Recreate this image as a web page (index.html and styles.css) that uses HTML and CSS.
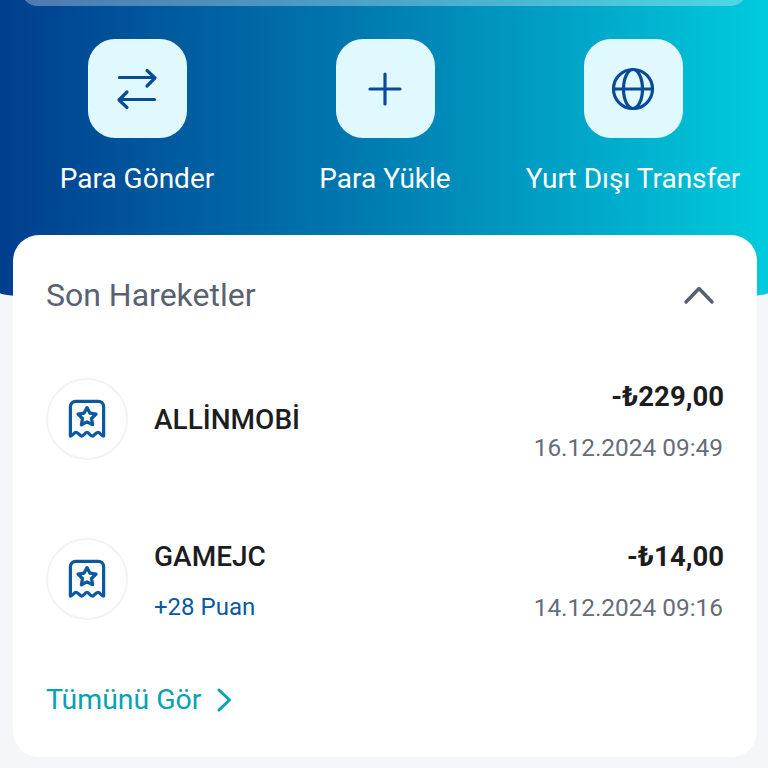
FILE: index.html
```html
<!DOCTYPE html>
<html lang="tr">
<head>
  <meta charset="UTF-8">
  <meta name="viewport" content="width=device-width, initial-scale=1.0">
  <title>Son Hareketler</title>
  <link rel="stylesheet" href="styles.css">
</head>
<body>
  <div class="hero">
    <div class="balance-edge"></div>
    <div class="actions">
      <div class="action">
        <div class="action-icon">
          <svg width="44" height="44" viewBox="0 0 44 44">
            <path d="M4.500 10.500H40M32 3.500L40 11L32 19M39.500 32.500H4M12 25L4 33L12 40.500"/>
          </svg>
        </div>
        <div class="action-label">Para Gönder</div>
      </div>
      <div class="action">
        <div class="action-icon">
          <svg width="44" height="44" viewBox="0 0 44 44">
            <path d="M7 22H37M22 7V37"/>
          </svg>
        </div>
        <div class="action-label">Para Yükle</div>
      </div>
      <div class="action">
        <div class="action-icon">
          <svg width="44" height="44" viewBox="0 0 44 44">
            <circle cx="22" cy="22" r="19.500"/>
            <ellipse cx="22" cy="22" rx="9.500" ry="19.500"/>
            <path d="M2.500 22H41.500"/>
          </svg>
        </div>
        <div class="action-label">Yurt Dışı Transfer</div>
      </div>
    </div>
  </div>

  <div class="card">
    <div class="card-header">
      <h2>Son Hareketler</h2>
      <svg class="chevron-up" width="32" height="20" viewBox="0 0 32 20">
        <path d="M3 17L16 3.500L29 17"/>
      </svg>
    </div>

    <div class="tx-row">
      <div class="tx-icon">
        <svg width="38" height="40" viewBox="0 0 40 42">
          <path d="M2.500 39V8A5.500 5.500 0 0 1 8 2.500H32A5.500 5.500 0 0 1 37.500 8V39C35 39 34 35 31.500 35S27.500 39 25.500 39S22 35 20 35S16.500 39 14.500 39S11 35 8.500 35S5 39 2.500 39Z"/>
          <path d="M20 9L23 14.800L29.500 15.900L24.800 20.500L25.900 27L20 24L14.100 27L15.200 20.500L10.500 15.900L17 14.800Z"/>
        </svg>
      </div>
      <div class="tx-info">
        <div class="tx-name">ALLİNMOBİ</div>
      </div>
      <div class="tx-right">
        <div class="tx-amount">-₺229,00</div>
        <div class="tx-date">16.12.2024 09:49</div>
      </div>
    </div>

    <div class="tx-row">
      <div class="tx-icon">
        <svg width="38" height="40" viewBox="0 0 40 42">
          <path d="M2.500 39V8A5.500 5.500 0 0 1 8 2.500H32A5.500 5.500 0 0 1 37.500 8V39C35 39 34 35 31.500 35S27.500 39 25.500 39S22 35 20 35S16.500 39 14.500 39S11 35 8.500 35S5 39 2.500 39Z"/>
          <path d="M20 9L23 14.800L29.500 15.900L24.800 20.500L25.900 27L20 24L14.100 27L15.200 20.500L10.500 15.900L17 14.800Z"/>
        </svg>
      </div>
      <div class="tx-info tx-info-double">
        <div class="tx-name">GAMEJC</div>
        <div class="tx-points">+28 Puan</div>
      </div>
      <div class="tx-right">
        <div class="tx-amount">-₺14,00</div>
        <div class="tx-date">14.12.2024 09:16</div>
      </div>
    </div>

    <div class="see-all">
      <span>Tümünü Gör</span>
      <svg width="16" height="24" viewBox="0 0 16 24">
        <path d="M3 2L13.500 12L3 22"/>
      </svg>
    </div>
  </div>
</body>
</html>
```

FILE: styles.css
```css
* {
  margin: 0;
  padding: 0;
  box-sizing: border-box;
}

body {
  height: 768px;
  overflow: hidden;
  font-family: Roboto, 'Noto Sans', sans-serif;
  background: #f4f6fa;
  color: #1c1d21;
}

.hero {
  height: 303px;
  overflow: hidden;
  background: linear-gradient(90deg, #003e8e 0%, #0077ae 45%, #00cbdd 100%);
  border-radius: 0 0 50% 50% / 0 0 10px 10px;
}

.balance-edge {
  height: 26px;
  margin: -20px 20px 0;
  background: rgba(255, 255, 255, 0.3);
  border-radius: 0 0 18px 18px;
}

.actions {
  display: grid;
  grid-template-columns: repeat(3, 248px);
  margin: 33px 0 0 13px;
}

.action {
  display: flex;
  flex-direction: column;
  align-items: center;
}

.action-icon {
  width: 99px;
  height: 99px;
  background: #e0f9ff;
  border-radius: 27px;
  display: flex;
  align-items: center;
  justify-content: center;
}

.action-icon svg {
  fill: none;
  stroke: #0a4b98;
  stroke-width: 3.200;
  stroke-linecap: round;
  stroke-linejoin: round;
}

.action-label {
  margin-top: 23px;
  font-size: 28px;
  line-height: 36px;
  color: #fff;
  white-space: nowrap;
}

.card {
  position: relative;
  height: 522px;
  margin: -68px 11px 0 13px;
  padding: 0 33px;
  background: #fff;
  border-radius: 26px;
}

.card-header {
  height: 104px;
  padding: 16px 9px 0 0;
  display: flex;
  align-items: center;
  justify-content: space-between;
}

.card-header h2 {
  font-size: 32px;
  font-weight: 400;
  color: #596170;
}

.chevron-up {
  fill: none;
  stroke: #596170;
  stroke-width: 3.500;
  stroke-linecap: round;
  stroke-linejoin: round;
}

.tx-row {
  height: 160px;
  display: flex;
  align-items: center;
}

.tx-icon {
  width: 82px;
  height: 82px;
  flex-shrink: 0;
  border: 2px solid #f2f3f6;
  border-radius: 50%;
  display: flex;
  align-items: center;
  justify-content: center;
}

.tx-icon svg {
  fill: none;
  stroke: #0b5a9e;
  stroke-width: 3.400;
  stroke-linejoin: round;
}

.tx-info {
  flex: 1;
  margin-left: 26px;
}

.tx-info-double {
  margin-top: 6px;
}

.tx-name {
  font-size: 28px;
  font-weight: 500;
  line-height: 51px;
}

.tx-points {
  font-size: 24px;
  line-height: 51px;
  color: #0b5a9e;
}

.tx-right {
  margin-top: 6px;
  text-align: right;
}

.tx-amount {
  font-size: 27.500px;
  font-weight: 700;
  line-height: 51px;
}

.tx-date {
  margin-right: 1px;
  font-size: 24.400px;
  line-height: 51px;
  color: #666c78;
}

.see-all {
  display: flex;
  align-items: center;
  gap: 15px;
  margin-top: 24px;
  font-size: 28.400px;
  color: #06a2b4;
}

.see-all svg {
  fill: none;
  stroke: #06a2b4;
  stroke-width: 3;
  stroke-linecap: round;
  stroke-linejoin: round;
}
```
